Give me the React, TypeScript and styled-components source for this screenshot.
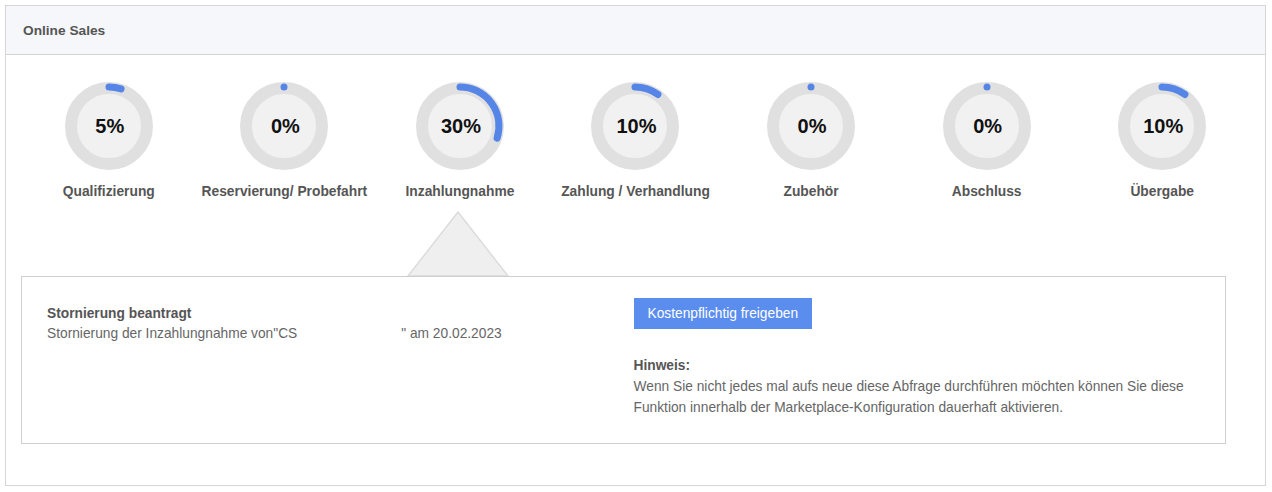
import React from "react";
import styled, { createGlobalStyle } from "styled-components";

const GlobalStyle = createGlobalStyle`
  html, body { margin: 0; padding: 0; background: #ffffff; }
  body { font-family: "Liberation Sans", Arial, sans-serif; }
`;

const Page = styled.div`
  padding: 5px 6px 6px 5px;
`;

const Card = styled.section`
  border: 1px solid #d6d6d6;
  height: 479px;
  display: flex;
  flex-direction: column;
  background: #fff;
`;

const Header = styled.header`
  height: 48px;
  flex: none;
  background: #f5f7fa;
  border-bottom: 1px solid #d6d6d6;
  display: flex;
  align-items: center;
  padding-left: 17px;
  font-size: 13.7px;
  font-weight: bold;
  color: #555;
`;

const Body = styled.div`
  padding: 27px 15px 0 15px;
`;

const Steps = styled.div`
  display: grid;
  grid-template-columns: repeat(7, 1fr);
`;

const Step = styled.div`
  display: flex;
  flex-direction: column;
  align-items: center;
`;

const Donut = styled.div`
  position: relative;
  width: 88px;
  height: 88px;
`;

const Percent = styled.span`
  position: absolute;
  inset: 0;
  display: flex;
  align-items: center;
  justify-content: center;
  padding-left: 2px;
  padding-top: 1px;
  font-size: 20px;
  font-weight: bold;
  color: #111;
`;

const Label = styled.div`
  margin-top: 14px;
  font-size: 13.8px;
  font-weight: bold;
  color: #555;
  white-space: nowrap;
`;

const PointerRow = styled.div`
  display: grid;
  grid-template-columns: repeat(7, 1fr);
  margin-top: 12px;
  height: 65px;
`;

const PointerCell = styled.div<{ $col: number }>`
  grid-column: ${(p) => p.$col};
  display: flex;
  justify-content: center;
  padding-right: 4px;
`;

const Panel = styled.div`
  margin-right: 24px;
  border: 1px solid #cfcfcf;
  display: grid;
  grid-template-columns: 1fr 1fr;
  column-gap: 20px;
  padding: 21px 25px 0 25px;
  box-sizing: border-box;
  height: 168px;
`;

const LeftCol = styled.div`
  padding-top: 6px;
  font-size: 13.75px;
  line-height: 20px;
  color: #666;
`;

const Title = styled.div`
  font-weight: bold;
  color: #555;
`;

const Redacted = styled.span`
  display: inline-block;
  width: 104px;
`;

const RightCol = styled.div`
  font-size: 13.75px;
  line-height: 21px;
  color: #666;
`;

const Button = styled.button`
  height: 31px;
  padding: 0 14px;
  border: none;
  background: #5b8def;
  color: #fff;
  font-family: "Liberation Sans", Arial, sans-serif;
  font-size: 13.75px;
  cursor: pointer;
`;

const NoteTitle = styled.div`
  margin-top: 26px;
  font-weight: bold;
  color: #555;
`;

const steps = [
  { label: "Qualifizierung", value: 5 },
  { label: "Reservierung/ Probefahrt", value: 0 },
  { label: "Inzahlungnahme", value: 30 },
  { label: "Zahlung / Verhandlung", value: 10 },
  { label: "Zubehör", value: 0 },
  { label: "Abschluss", value: 0 },
  { label: "Übergabe", value: 10 },
];

function Ring({ value }: { value: number }) {
  const c = 44;
  const r = 39;
  const a = (value / 100) * Math.PI * 2;
  const x = c + r * Math.sin(a);
  const y = c - r * Math.cos(a);
  const large = value > 50 ? 1 : 0;
  return (
    <svg width="88" height="88" viewBox="0 0 88 88">
      <circle cx={c} cy={c} r={38} fill="#f1f1f1" stroke="#e0e0e0" strokeWidth={12} />
      {value > 0 ? (
        <path
          d={`M ${c} ${c - r} A ${r} ${r} 0 ${large} 1 ${x} ${y}`}
          fill="none"
          stroke="#5585e6"
          strokeWidth={7}
          strokeLinecap="round"
        />
      ) : (
        <circle cx={c} cy={c - r} r={3.5} fill="#5585e6" />
      )}
    </svg>
  );
}

export default function App() {
  return (
    <>
      <GlobalStyle />
      <Page>
        <Card>
          <Header>Online Sales</Header>
          <Body>
            <Steps>
              {steps.map((s) => (
                <Step key={s.label}>
                  <Donut>
                    <Ring value={s.value} />
                    <Percent>{s.value}%</Percent>
                  </Donut>
                  <Label>{s.label}</Label>
                </Step>
              ))}
            </Steps>
            <PointerRow>
              <PointerCell $col={3}>
                <svg width="102" height="65" viewBox="0 0 102 65">
                  <polygon points="1,65 51,1 101,65" fill="#efefef" stroke="#dcdcdc" strokeWidth={1.5} />
                </svg>
              </PointerCell>
            </PointerRow>
            <Panel>
              <LeftCol>
                <Title>Stornierung beantragt</Title>
                <div>
                  Stornierung der Inzahlungnahme von"CS<Redacted />" am 20.02.2023
                </div>
              </LeftCol>
              <RightCol>
                <Button>Kostenpflichtig freigeben</Button>
                <NoteTitle>Hinweis:</NoteTitle>
                <div>
                  Wenn Sie nicht jedes mal aufs neue diese Abfrage durchführen möchten können Sie diese
                  <br />
                  Funktion innerhalb der Marketplace-Konfiguration dauerhaft aktivieren.
                </div>
              </RightCol>
            </Panel>
          </Body>
        </Card>
      </Page>
    </>
  );
}
